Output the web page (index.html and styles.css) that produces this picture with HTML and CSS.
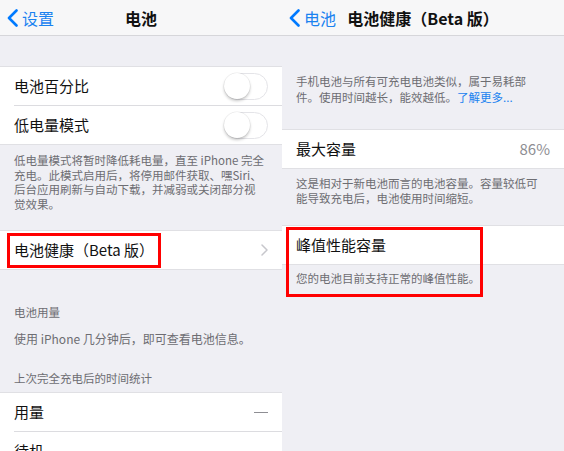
FILE: index.html
```html
<!DOCTYPE html>
<html lang="zh-CN">
<head>
<meta charset="utf-8">
<title>电池</title>
<link rel="stylesheet" href="styles.css">
</head>
<body>
<div class="screen">
  <section class="panel">
    <header class="nav">
      <a class="back"><svg class="back-icon" width="11" height="18" viewBox="0 0 11 18"><path d="M9.5 1.5 L2 9 L9.5 16.5" fill="none" stroke="#007aff" stroke-width="2.6" stroke-linecap="round" stroke-linejoin="round"/></svg>设置</a>
      <h1 class="title">电池</h1>
      <span></span>
    </header>
    <div class="spacer s30"></div>
    <div class="group">
      <div class="cell"><span class="label">电池百分比</span><span class="switch"><span class="knob"></span></span></div>
      <div class="cell"><span class="label">低电量模式</span><span class="switch"><span class="knob"></span></span></div>
    </div>
    <p class="footer f-left">低电量模式将暂时降低耗电量，直至 iPhone 完全<br>充电。此模式启用后，将停用邮件获取、嘿Siri、<br>后台应用刷新与自动下载，并减弱或关闭部分视<br>觉效果。</p>
    <div class="group">
      <div class="cell"><span class="label">电池健康（Beta 版）</span><svg class="chev" width="7" height="12" viewBox="0 0 7 12"><path d="M1 1 L6 6 L1 11" fill="none" stroke="#c7c7cc" stroke-width="1.5" stroke-linecap="round" stroke-linejoin="round"/></svg></div>
    </div>
    <p class="section-head sh1">电池用量</p>
    <p class="section-note">使用 iPhone 几分钟后，即可查看电池信息。</p>
    <p class="section-head sh2">上次完全充电后的时间统计</p>
    <div class="group">
      <div class="cell"><span class="label">用量</span><span class="dash"></span></div>
      <div class="cell"><span class="label">待机</span><span class="dash"></span></div>
    </div>
    <div class="mark mark-left"></div>
  </section>

  <section class="panel">
    <header class="nav">
      <a class="back"><svg class="back-icon" width="11" height="18" viewBox="0 0 11 18"><path d="M9.5 1.5 L2 9 L9.5 16.5" fill="none" stroke="#007aff" stroke-width="2.6" stroke-linecap="round" stroke-linejoin="round"/></svg>电池</a>
      <h1 class="title">电池健康（Beta 版）</h1>
      <span></span>
    </header>
    <p class="footer f-intro">手机电池与所有可充电电池类似，属于易耗部<br>件。使用时间越长，能效越低。<span class="link">了解更多...</span></p>
    <div class="group">
      <div class="cell c38"><span class="label">最大容量</span><span class="value">86%</span></div>
    </div>
    <p class="footer f-cap">这是相对于新电池而言的电池容量。容量较低可<br>能导致充电后，电池使用时间缩短。</p>
    <div class="group">
      <div class="cell c38"><span class="label">峰值性能容量</span></div>
    </div>
    <p class="footer f-peak">您的电池目前支持正常的峰值性能。</p>
    <div class="mark mark-right"></div>
  </section>
</div>
</body>
</html>
```
FILE: styles.css
```css
* { box-sizing: border-box; }
html, body { margin: 0; padding: 0; }
body {
  background: #efeff4;
  font-family: "Noto Sans CJK SC", "Noto Sans", sans-serif;
  color: #000;
  overflow: hidden;
}
p, h1 { margin: 0; }
.screen {
  display: grid;
  grid-template-columns: 282px 282px;
  width: 564px;
  height: 451px;
  overflow: hidden;
}
.panel {
  position: relative;
  background: #efeff4;
  overflow: hidden;
}
.nav {
  height: 36px;
  background: #f7f7f8;
  border-bottom: 1px solid #d6d6da;
  display: grid;
  grid-template-columns: 1fr auto 1fr;
  align-items: center;
}
.back {
  display: flex;
  align-items: center;
  gap: 4px;
  padding-left: 7px;
  color: #1a82f0;
  font-size: 16px;
  line-height: 20px;
}
.title {
  font-size: 16px;
  font-weight: 700;
  line-height: 20px;
  color: #111;
}
.spacer.s30 { height: 30px; }
.group {
  background: #fff;
  border-top: 1px solid #e0e0e4;
  border-bottom: 1px solid #e0e0e4;
}
.cell {
  position: relative;
  height: 38px;
  padding: 0 14px;
  display: flex;
  align-items: center;
  justify-content: space-between;
}
.cell + .cell::before {
  content: "";
  position: absolute;
  top: -1px;
  left: 14px;
  right: 0;
  border-top: 1px solid #dcdce0;
}
.cell + .cell { margin-top: 1px; }
.label {
  font-size: 15px;
  line-height: 20px;
  color: #111;
}
.switch {
  position: relative;
  width: 44px;
  height: 27px;
  border-radius: 14px;
  border: 1.5px solid #e4e4e8;
  background: #fff;
}
.knob {
  position: absolute;
  left: -1px;
  top: -1px;
  width: 26px;
  height: 26px;
  border-radius: 50%;
  background: #fff;
  box-shadow: 0 2px 3px rgba(0,0,0,0.22), 0 0 0 0.5px rgba(0,0,0,0.08);
}
.chev { margin-right: 0; }
.dash {
  width: 14px;
  border-top: 1.5px solid #8e8e93;
}
.value {
  font-size: 15px;
  line-height: 20px;
  color: #8e8e93;
}
.footer {
  font-size: 11.5px;
  color: #6d6d72;
  padding: 0 14px;
}
.f-left { line-height: 14.5px; padding-top: 8px; padding-bottom: 19px; }
.f-intro { line-height: 16px; padding-top: 37px; padding-bottom: 24px; }
.f-cap { line-height: 15px; padding-top: 7px; padding-bottom: 19px; }
.f-peak { line-height: 16px; padding-top: 5px; }
.link { color: #1a82f0; }
.section-head, .section-note {
  font-size: 11.5px;
  line-height: 14px;
  color: #6d6d72;
  padding: 0 14px;
}
.sh1 { padding-top: 35px; }
.section-note { padding-top: 13px; font-size: 12px; }
.sh2 { padding-top: 25px; padding-bottom: 7px; }
.mark {
  position: absolute;
  border: 3px solid #f00;
  pointer-events: none;
}
.mark-left { left: 7px; top: 233px; width: 154px; height: 35px; }
.mark-right { left: 4px; top: 227px; width: 197px; height: 70px; }
```
